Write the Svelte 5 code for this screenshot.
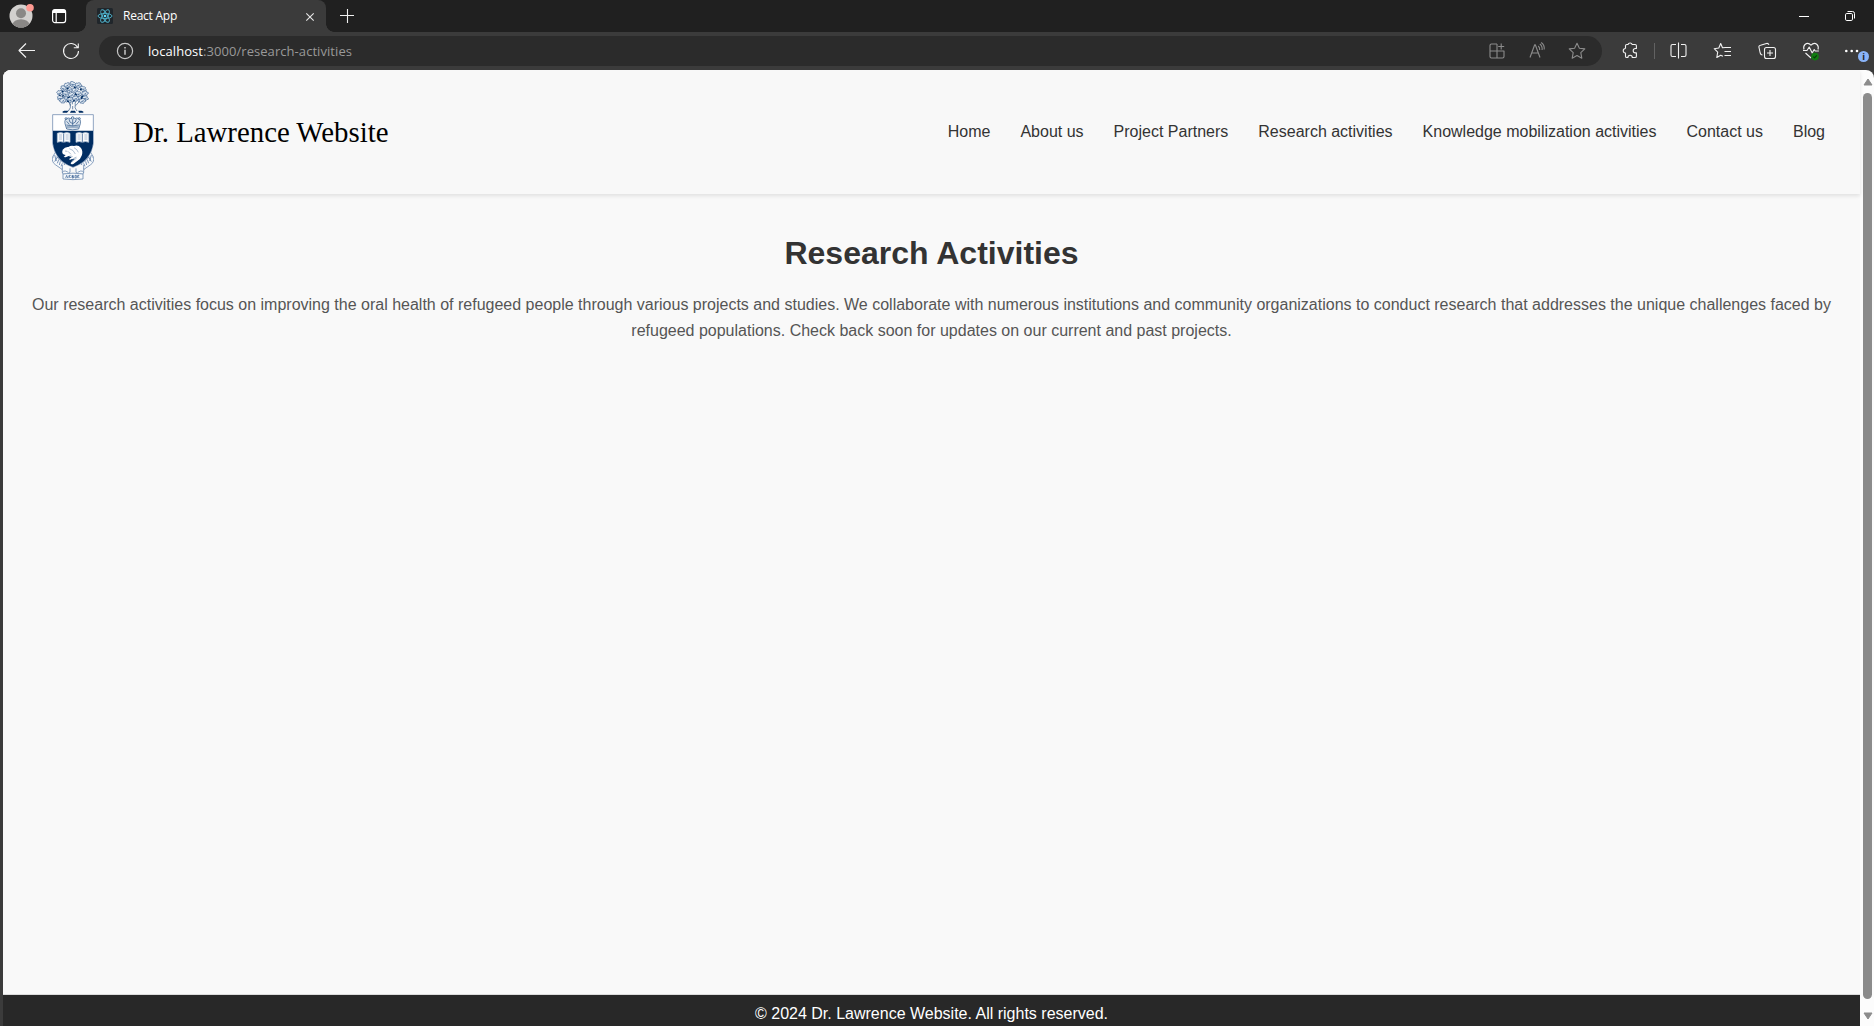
<script>
  const links = ['Home', 'About us', 'Project Partners', 'Research activities', 'Knowledge mobilization activities', 'Contact us', 'Blog'];
  // foliage clusters of the crest's tree: x, y, rotation
  const leaves = [[112, 43, 10], [128, 40, 50], [145, 43, 20], [100, 53, 60], [159, 54, 40], [117, 57, 30], [136, 57, 0], [90, 66, 20], [106, 69, 50], [125, 72, 10], [145, 69, 35], [165, 68, 5], [91, 82, 40], [108, 85, 15], [149, 85, 50], [165, 82, 25], [137, 83, 20], [121, 87, 40], [99, 89, 0], [157, 90, 10]];
</script>

<div class="window">
  <div class="tabs">
    <svg class="avatar" width="26" height="26" viewBox="0 0 26 26">
      <defs><clipPath id="face"><circle cx="13" cy="13" r="11.5" /></clipPath></defs>
      <circle cx="13" cy="13" r="11.5" fill="#d2d0ce" />
      <g clip-path="url(#face)" fill="#8a8886"><circle cx="13" cy="10.3" r="5" /><ellipse cx="13" cy="21.5" rx="8.3" ry="5.2" /></g>
      <circle cx="22" cy="4.7" r="3.8" fill="#ff9a92" />
    </svg>
    <svg class="spaces" width="16" height="16" viewBox="0 0 16 16">
      <rect x="1.6" y="1.6" width="13" height="13" rx="2.3" fill="none" stroke="#fff" stroke-width="1.2" />
      <path d="M1.6 5V3.5q0-2 2-2h9q2 0 2 2V5z" fill="#fff" /><path d="M5.2 5v9.4" stroke="#fff" stroke-width="1.2" />
    </svg>
    <div class="tab">
      <svg class="react" width="16" height="16" viewBox="0 0 16 16">
        <rect width="16" height="16" rx="1.5" fill="#20262b" />
        <g fill="none" stroke="#4fb3cc" stroke-width=".9">
          <ellipse cx="8" cy="8" rx="7" ry="2.6" /><ellipse cx="8" cy="8" rx="7" ry="2.6" transform="rotate(60 8 8)" /><ellipse cx="8" cy="8" rx="7" ry="2.6" transform="rotate(120 8 8)" />
        </g>
        <circle cx="8" cy="8" r="1.3" fill="#61dafb" />
      </svg>
      <span class="name">React App</span>
      <svg class="close" width="10" height="10" viewBox="0 0 10 10"><path d="M1.300 1.300l7.400 7.400M8.700 1.300L1.300 8.700" stroke="#e6e6e6" stroke-width="1.1" /></svg>
    </div>
    <svg class="plus" width="16" height="16" viewBox="0 0 16 16"><path d="M1 7.500h14M8.500 1v14" stroke="#f0f0f0" stroke-width="1.1" /></svg>
    <div class="controls">
      <svg width="12" height="12" viewBox="0 0 12 12"><path d="M1 6.500h10" stroke="#fff" /></svg>
      <svg width="12" height="12" viewBox="0 0 12 12" fill="none" stroke="#fff"><rect x="1.500" y="3.500" width="7" height="7" rx="1.3" /><path d="M3.500 1.500h5q2 0 2 2v5" /></svg>
    </div>
  </div>

  <div class="toolbar">
    <div class="btn"><svg viewBox="0 0 20 20"><path d="M18 9.500H2.500M9 2.500l-7 7 7 7" /></svg></div>
    <div class="btn"><svg viewBox="0 0 20 20"><path d="M16.500 6.200A7.500 7.500 0 1 0 17.500 10M17.300 2.500v4.200h-4.500" /></svg></div>
    <div class="address">
      <svg class="info" width="18" height="18" viewBox="0 0 18 18" fill="none" stroke="#c8c8c8"><circle cx="9" cy="9" r="7.600" stroke-width="1.200" /><path d="M9 7.800v5M9 4.900v1.500" stroke-width="1.500" /></svg>
      <span class="url"><b>localhost</b>:3000/research-activities</span>
      <div class="btn dim"><svg viewBox="0 0 20 20"><path d="M10 3H4.500Q3 3 3 4.500v11Q3 17 4.500 17h11q1.500 0 1.500-1.500V10H3M10 3v14M14.200 2.500v6M11.200 5.500h6" /></svg></div>
      <div class="btn dim"><svg viewBox="0 0 20 20"><path d="M3 16.500L7.700 3.700h.6L13 16.500M4.700 12h6.600M11.200 5q1.800 1.500 1.500 4M12.800 3q2.800 2 2.300 6M14.200 1.500q3.600 2.500 3 7" /></svg></div>
      <div class="btn dim"><svg viewBox="0 0 20 20"><path d="M10 2.200l2.400 5 5.400.7-4 3.800 1 5.500L10 14.600l-4.800 2.600 1-5.500-4-3.800 5.400-.7z" /></svg></div>
    </div>
    <div class="btn"><svg viewBox="0 0 20 20"><path d="M5.500 7.500V4.800q0-1.300 1.300-1.300H8a2.200 2.200 0 0 1 4.200 0h2.900q1.300 0 1.300 1.300v2.700h-1a2.200 2.200 0 0 0 0 4.400h1v3.300q0 1.300-1.300 1.300h-2.800a2.200 2.200 0 0 0-4.400 0H6.800q-1.300 0-1.300-1.300V12a2.200 2.200 0 1 1 0-4.500" /></svg></div>
    <i class="divider"></i>
    <div class="btn"><svg viewBox="0 0 20 20"><path d="M8 3.500H4.500Q3 3.500 3 5v9q0 1.500 1.500 1.500H8M13 3.500h3.500Q18 3.500 18 5v9q0 1.500-1.500 1.500H13M10.500 1.500v16" /></svg></div>
    <div class="btn"><svg class="nudge" viewBox="0 0 20 20"><path d="M18 6.500h-5.700L9.500 6.700 7.700 2.500 5.800 7l-4.600.7 3.500 3.500-.9 5.300 3.900-2.300 2.200 1.100M11.500 10.500h6.500M11.500 14.500h6.500" /></svg></div>
    <div class="btn"><svg class="nudge" viewBox="0 0 20 20"><rect x="7.500" y="6.500" width="11" height="11" rx="2" /><path d="M13 9v6M10 12h6M5.500 14q-1.800 0-2.300-2L2 6.500Q1.500 4.700 3.500 4.200l6-1.700q1.600-.4 2.500 1.300" /></svg></div>
    <div class="btn"><svg class="nudge" viewBox="0 0 20 20"><path d="M3 8.500Q2 5.500 4 3.500q3-2.500 6 .7 3-3.200 6-.7 2 2 1 5M2 9.500h4L8.200 6l3 6 2-3.500 1 1.500h3.700M4.500 12l5.500 5" /><circle cx="14" cy="15.600" r="3.800" fill="#107c10" stroke="none" /><path d="M12.300 15.700l1.200 1.200 2.300-2.500" stroke="#08370a" /></svg></div>
    <div class="btn"><svg viewBox="0 0 20 20"><g fill="#fff" stroke="none"><circle cx="2.300" cy="10" r="1.300" /><circle cx="7.700" cy="10" r="1.300" /><circle cx="13" cy="10" r="1.300" /></g></svg><span class="badge">i</span></div>
  </div>

  <div class="view">
    <div class="page">
      <header>
        <svg class="crest" width="42" height="100" viewBox="66 30 126 300" fill="none" stroke="#6885ab" stroke-width="2.200">
          <path d="M115 120q9-8 6-22l-12-11M121 104l-7-22M127 100V78m8 20l8-22m-6 28l14-16M141 120q-9-8-5-22M128 105v10" stroke="#426690" />
          <g stroke="#3f6492" stroke-width="1.900" fill="#dfe8f1">
            {#each leaves as [x, y, r]}
              <path transform="translate({x} {y}) rotate({r})" d="M0-8q4-2 5 3 6-1 5 4-5 1-4 5-2 6-6 2-5 4-6-2-6-1-3-5 0-6 5-4 0-2 4-3zM-4 4L4-3M0 0l4 3" />
            {/each}
          </g>
          <path d="M96 60l4 3m11-8l4-4m17-3l5 4m13 5l5-4M97 76l4-3m12 8l6-4m16-9l5 4m14 6l6-3M88 74l3-2m39 19l4-3m-18 5l-4-4m45-10l-4 4" stroke="#002d62" stroke-width="4.500" />
          <path d="M103 119q-9 3-4 6h12l5-6zm20 0l-3 6h18l-3-6zm22 0l2 6h12q5-3-5-6z" fill="#002d62" stroke="none" />
          <g fill="#f8fafc" stroke="#5f7fa8">
            <path d="M77 243q-12 11-7 27l25 18 10-9-20-16q-7-7-1-14zM181 243q12 11 7 27l-25 18-10-9 20-16q7-7 1-14z" />
            <path d="M67 257q-2 17 9 24l20 14 8-10M191 257q2 17-9 24l-20 14-8-10" />
            <path d="M97 282v23l14 5 9-6v-12M161 282v23l-14 5-9-6v-12" />
            <path d="M99 309q30-5 60 0v15q-30 4-60 0zM99 309q-5-9 7-9l9 4M159 309q5-9-7-9l-9 4" />
          </g>
          <path d="M74 252l5 18m3-12l-8 14m12-6l-4 11m9-6l-3 11m9-5l-4 9M184 252l-5 18m-3-12l8 14m-12-6l4 11m-9-6l3 11m-9-5l4 9" stroke="#375e92" stroke-width="2" />
          <path d="M107 321l3-8 3 8m4 0v-8h4l-3 4 4 4m4-8v8h4q3-4-4-4h4q3-4-4-4m13 0h-4v8h4zm4 8v-8h4l-3 4 4 4" stroke="#315b8f" stroke-width="2" />
          <path d="M68 131h122v87q-8 53-61 71-53-18-61-71z" fill="#fff" />
          <path d="M69 179h120v39q-8 52-60 70-52-18-60-70z" fill="#002d62" stroke="none" />
          <g stroke="#315b8a" fill="#dae3ed">
            <path d="M110 174l-5-16q-3-16 11-17 8 1 12 8 4-7 12-8 14 1 11 17l-5 16q-18 5-36 0z" />
            <path d="M109 162q19 5 38 0M117 144q0 11 11 14 11-3 11-14M128 147v17M110 151l8 9m28-9l-8 9M110 168h36" />
            <circle cx="128" cy="141" r="4" /><circle cx="108" cy="143" r="3" /><circle cx="148" cy="143" r="3" />
          </g>
          <g fill="#f8fafc" stroke="#b8c8d9">
            <path d="M82 187q10-5 19 0 9-5 19 0v27q-10-5-19 0-9-5-19 0zM138 187q10-5 19 0 9-5 19 0v27q-10-5-19 0-9-5-19 0z" />
            <path d="M101 188v27m56-27v27" stroke="#254e82" />
            <path d="M87 192h9m-9 6h9m-9 6h9m11-12h9m-9 6h9m-9 6h9m27-12h9m-9 6h9m-9 6h9m11-12h9m-9 6h9m-9 6h9" stroke="#7792b2" stroke-width="1.600" />
          </g>
          <path d="M98 236q7-9 17-8 8-6 17-3 13-4 21 6 7 11 2 23-4 12-14 17l-11 8q-8 3-8-3l12-13-8 1-7 3-1-4 7-4-9-4-9 4-6-1 6-6q-14-2-9-16z" fill="#fff" stroke="none" />
          <path d="M105 240l7 1m6-8q13 3 18 16m-22-8l9 9m9-20q10 5 13 14m-6 14q-9 2-14 14m3-15l-9-3m8 17l13-10" stroke="#7893b4" stroke-width="1.800" />
        </svg>
        <div class="brand">Dr. Lawrence Website</div>
        <nav>{#each links as l}<a href="#top">{l}</a>{/each}</nav>
      </header>
      <main>
        <h1>Research Activities</h1>
        <p>Our research activities focus on improving the oral health of refugeed people through various projects and studies. We collaborate with numerous institutions and community organizations to conduct research that addresses the unique challenges faced by refugeed populations. Check back soon for updates on our current and past projects.</p>
      </main>
      <footer>© 2024 Dr. Lawrence Website. All rights reserved.</footer>
    </div>
    <div class="scroll">
      <svg width="10" height="8" viewBox="0 0 10 8"><path d="M5 1L9 7H1z" fill="#8b8b8b" stroke="#8b8b8b" stroke-linejoin="round" /></svg>
      <div class="thumb"></div>
      <svg width="10" height="8" viewBox="0 0 10 8"><path d="M5 7L1 1h8z" fill="#8b8b8b" stroke="#8b8b8b" stroke-linejoin="round" /></svg>
    </div>
  </div>
</div>

<style>
  :global(body) { margin: 0; overflow: hidden; }
  * { box-sizing: border-box; }
  svg { display: block; flex: none; }
  .window { width: 1874px; height: 1026px; display: flex; flex-direction: column; background: #3b3b3b; font-family: "Liberation Sans", Arial, sans-serif; overflow: hidden; }
  .tabs { height: 32px; flex: none; display: flex; align-items: center; background: #202020; }
  .avatar { margin-left: 8px; }
  .spaces { margin-left: 17px; }
  .tab { width: 240px; height: 32px; margin-left: 19px; padding: 0 11px; display: flex; align-items: center; background: #3b3b3b; border-radius: 8px 8px 0 0; position: relative; }
  .tab::before, .tab::after { content: ""; position: absolute; bottom: 0; width: 8px; height: 8px; }
  .tab::before { left: -8px; background: radial-gradient(circle at 0 0, #202020 7.500px, #3b3b3b 8px); }
  .tab::after { right: -8px; background: radial-gradient(circle at 100% 0, #202020 7.500px, #3b3b3b 8px); }
  .name { margin: -2px 0 0 10px; color: #fff; font: 12px "Open Sans", sans-serif; letter-spacing: -.25px; }
  .close { margin: 1px 0 0 auto; }
  .plus { margin-left: 13px; }
  .controls { display: flex; gap: 34px; margin-left: auto; margin-right: 18px; }
  .toolbar { height: 38px; flex: none; display: flex; align-items: center; gap: 4px; padding-left: 7px; }
  .btn { width: 40px; height: 30px; flex: none; display: flex; align-items: center; justify-content: center; position: relative; }
  .btn svg { width: 20px; height: 20px; fill: none; stroke: #f2f2f2; stroke-width: 1.100; stroke-linejoin: round; }
  .btn .nudge { margin-left: 2px; }
  .btn.dim svg { stroke: #8c8c8c; }
  .address { flex: 1; height: 30px; margin: 0 4px; padding: 0 5px 0 17px; border-radius: 15px; background: #2b2b2b; display: flex; align-items: center; }
  .url { margin: 0 auto 0 14px; color: #999; font: 13px "Open Sans", sans-serif; letter-spacing: .06px; white-space: nowrap; }
  .url b { color: #fff; font-weight: 400; }
  .divider { width: 1px; height: 16px; background: #626262; margin-right: -1px; }
  .badge { position: absolute; left: 24px; top: 15px; width: 11px; height: 11px; border-radius: 50%; background: #8ab4f8; color: #202020; font: bold 9px/11px "Open Sans", sans-serif; text-align: center; }
  .view { flex: 1; min-height: 0; margin-left: 3px; display: flex; background: #fcfcfc; border-radius: 8px 8px 0 0; overflow: hidden; }
  .page { width: 1857px; display: flex; flex-direction: column; background: #f9f9f9; }
  header { height: 124px; flex: none; display: flex; align-items: center; padding: 0 35px 0 49px; background: #f8f8f8; box-shadow: 0 2px 4px rgba(0, 0, 0, .1); }
  .crest { margin-top: -2px; }
  .brand { margin: 1px 0 0 39px; color: #000; font: 28.800px "Liberation Serif", "Times New Roman", serif; }
  nav { margin-left: auto; display: flex; gap: 30px; margin-top: -1px; }
  nav a { color: #333; font-size: 16px; text-decoration: none; white-space: nowrap; }
  main { flex: 1; padding: 41px 20px; text-align: center; }
  h1 { margin: 0 0 20px; color: #333; font-size: 32px; line-height: 37px; }
  p { margin: 0; color: #555; font-size: 16px; line-height: 25.600px; }
  footer { height: 32px; flex: none; border-top: 1px solid #dcdcdc; padding-top: 9px; background: #282828; color: #fff; text-align: center; font-size: 16px; line-height: 20px; }
  .scroll { width: 14px; display: flex; flex-direction: column; align-items: center; padding: 8px 0 6px 1px; }
  .thumb { width: 9px; flex: 1; margin: 7px 0 13px; border-radius: 5px; background: #8b8b8b; }
</style>
